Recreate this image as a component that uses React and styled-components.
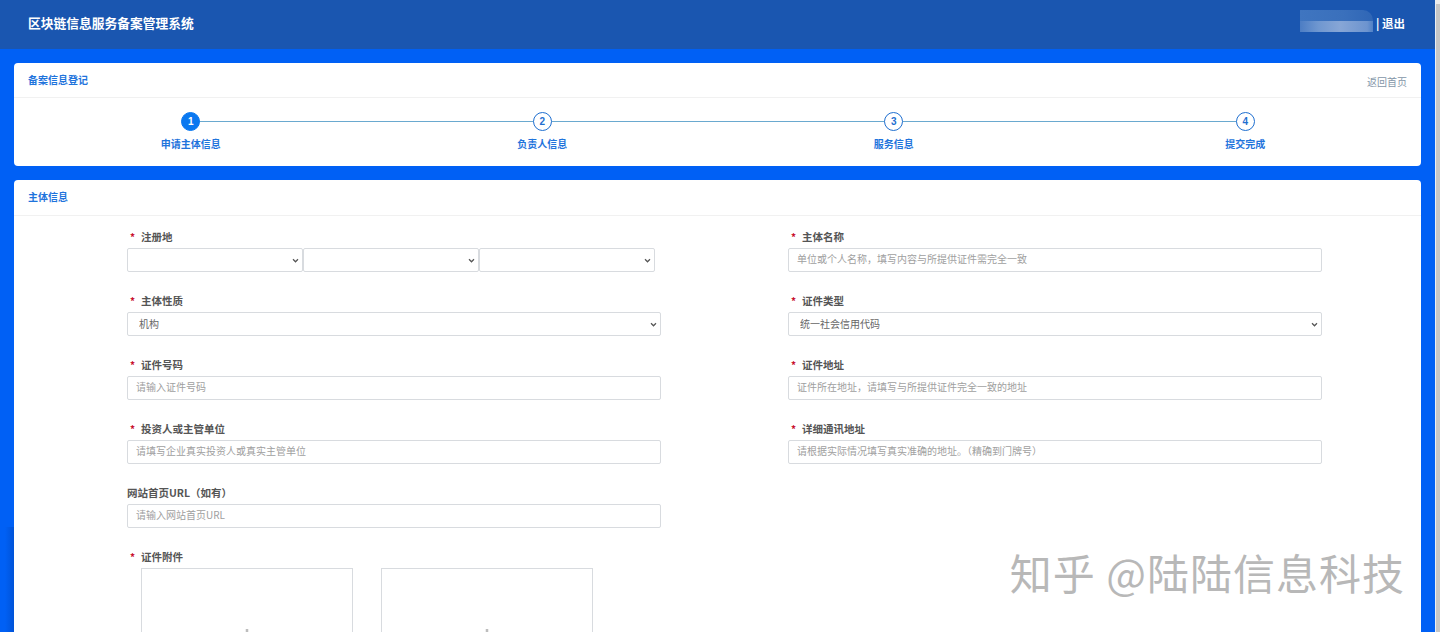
import React from 'react';
import styled, { createGlobalStyle } from 'styled-components';

const chevron =
  "url(\"data:image/svg+xml,%3Csvg xmlns='http://www.w3.org/2000/svg' viewBox='0 0 8 6'%3E%3Cpath d='M1 1.5l3 3 3-3' fill='none' stroke='%23555' stroke-width='1.5'/%3E%3C/svg%3E\")";

const GlobalStyle = createGlobalStyle`
  html, body {
    margin: 0;
    height: 632px;
    overflow: hidden;
    background: #0060f5;
  }
  body, input, select {
    font-family: "Noto Sans CJK SC", "Liberation Sans", sans-serif;
  }
  #root {
    height: 632px;
  }
`;

const Page = styled.div`
  display: flex;
  height: 632px;
  overflow: hidden;
  position: relative;
`;

const Main = styled.div`
  flex: 1;
  min-width: 0;
`;

const Scrollbar = styled.div`
  box-sizing: border-box;
  width: 5px;
  border-left: 1px solid #eceff3;
  background: linear-gradient(180deg, #ececec 0 4px, #c6c6c6 4px);
`;

const EdgeShade = styled.div`
  position: absolute;
  left: 5px;
  top: 527px;
  bottom: 0;
  width: 9px;
  background: linear-gradient(90deg, #0060f5, #0053d8);
`;

const Header = styled.header`
  box-sizing: border-box;
  height: 49px;
  background: #1a56b0;
  display: flex;
  align-items: center;
  justify-content: space-between;
  padding: 0 30px 4px 28px;
  color: #fff;
`;

const Title = styled.div`
  font-size: 12.75px;
  font-weight: 700;
`;

const User = styled.div`
  display: flex;
  align-items: center;
  gap: 3px;
  font-size: 11.5px;
  font-weight: 700;
`;

const BlurredName = styled.div`
  width: 73px;
  height: 22px;
  margin-top: -4px;
  border-radius: 0 10px 0 0;
  background:
    linear-gradient(90deg, #3f75c0, #3a70bc 60%, #2f66b6) top / 100% 50% no-repeat,
    linear-gradient(90deg, #4c7dc4, #6f97d0 25%, #87a6d6 55%, #6d94cf 92%, #4f80c6) bottom / 100% 50% no-repeat;
`;

const Content = styled.main`
  display: flex;
  flex-direction: column;
  gap: 14px;
  padding: 14px 14px 0;
`;

const Card = styled.section`
  background: #fff;
  border-radius: 4px;
`;

const CardHead = styled.div`
  box-sizing: border-box;
  height: ${({ $tall }) => ($tall ? '36px' : '35px')};
  padding: 0 14px 2px;
  display: flex;
  align-items: center;
  justify-content: space-between;
  border-bottom: 1px solid #f1f1f1;
  color: #1f74dc;
  font-size: 10px;
  font-weight: 700;
`;

const BackLink = styled.a`
  color: #8496a8;
  font-size: 10px;
  font-weight: 400;
  padding-top: 5px;
`;

const Steps = styled.div`
  box-sizing: border-box;
  display: grid;
  grid-template-columns: repeat(4, 1fr);
  height: 68px;
  padding-left: 1px;
`;

const Step = styled.div`
  position: relative;
  display: flex;
  flex-direction: column;
  align-items: center;
  padding-top: 14px;
  color: #1f74dc;
  font-size: 10px;
  font-weight: 700;

  &:not(:last-child)::after {
    content: '';
    position: absolute;
    top: 23px;
    left: 50%;
    width: 100%;
    height: 1px;
    background: #6aa9cf;
  }
`;

const StepDot = styled.div`
  position: relative;
  z-index: 1;
  box-sizing: border-box;
  width: 19px;
  height: 19px;
  margin-bottom: 5px;
  border-radius: 50%;
  border: 1.5px solid ${({ $active }) => ($active ? '#0a78f0' : '#1f6fd0')};
  background: ${({ $active }) => ($active ? '#0a78f0' : '#fff')};
  color: ${({ $active }) => ($active ? '#fff' : '#1f6fd0')};
  display: flex;
  align-items: center;
  justify-content: center;
  font-family: "Liberation Sans", sans-serif;
  font-size: 10px;
  font-weight: 700;
`;

const FormGrid = styled.div`
  display: grid;
  grid-template-columns: 534px 534px;
  column-gap: 127px;
  row-gap: 19px;
  padding: 11px 99px 0 113px;
`;

const Field = styled.div`
  display: flex;
  flex-direction: column;
  ${({ $full }) => $full && 'grid-column: 1 / -1;'}
`;

const Label = styled.label`
  box-sizing: border-box;
  height: 21px;
  padding: 0 0 3px ${({ $required }) => ($required ? '3px' : '0')};
  display: flex;
  align-items: center;
  color: #555;
  font-size: 10.5px;
  font-weight: 700;
`;

const Star = styled.span`
  width: 11px;
  color: #c8102e;
  font-size: 10px;
`;

const Input = styled.input`
  box-sizing: border-box;
  width: 100%;
  height: 24px;
  padding: 0 8px 3px;
  background: #fff;
  border: 1px solid #d8dbdf;
  border-radius: 2px;
  font-size: 10px;
  outline: none;

  &::placeholder {
    color: #a0a0a0;
  }
`;

const Select = styled.select`
  box-sizing: border-box;
  appearance: none;
  width: ${({ $narrow }) => ($narrow ? '176px' : '100%')};
  height: 24px;
  padding: 0 16px 2px 11px;
  background: #fff ${chevron} no-repeat right 3px center / 7px 5px;
  border: 1px solid #d8dbdf;
  border-radius: 2px;
  color: #666;
  font-size: 10px;
  outline: none;
`;

const SelectGroup = styled.div`
  display: flex;
`;

const Uploads = styled.div`
  display: flex;
  gap: 28px;
  padding-left: 14px;
`;

const UploadBox = styled.div`
  box-sizing: border-box;
  width: 212px;
  height: 130px;
  border: 1px solid #d8dbdf;
  display: flex;
  justify-content: center;
  padding-top: 60px;
`;

const PlusIcon = () => (
  <svg width="18" height="18" viewBox="0 0 18 18" fill="none" stroke="#bdbdbd" strokeWidth="2.5">
    <path d="M9 0v18M0 9h18" />
  </svg>
);

const Watermark = styled.div`
  position: absolute;
  right: 35px;
  top: 544px;
  color: #b8b8b8;
  font-size: 42px;
  line-height: 56px;
  letter-spacing: 1px;
  white-space: nowrap;
`;

const steps = ['申请主体信息', '负责人信息', '服务信息', '提交完成'];

const FormField = ({ label, required, children, full }) => (
  <Field $full={full}>
    <Label $required={required}>
      {required && <Star>*</Star>}
      {label}
    </Label>
    {children}
  </Field>
);

const App = () => {
  return (
    <Page>
      <GlobalStyle />
      <Main>
        <Header>
          <Title>区块链信息服务备案管理系统</Title>
          <User>
            <BlurredName />
            <span>| 退出</span>
          </User>
        </Header>
        <Content>
          <Card>
            <CardHead>
              备案信息登记
              <BackLink>返回首页</BackLink>
            </CardHead>
            <Steps>
              {steps.map((name, i) => (
                <Step key={name}>
                  <StepDot $active={i === 0}>{i + 1}</StepDot>
                  {name}
                </Step>
              ))}
            </Steps>
          </Card>
          <Card>
            <CardHead $tall>主体信息</CardHead>
            <FormGrid>
              <FormField label="注册地" required>
                <SelectGroup>
                  <Select $narrow />
                  <Select $narrow />
                  <Select $narrow />
                </SelectGroup>
              </FormField>
              <FormField label="主体名称" required>
                <Input placeholder="单位或个人名称，填写内容与所提供证件需完全一致" />
              </FormField>
              <FormField label="主体性质" required>
                <Select defaultValue="机构">
                  <option>机构</option>
                </Select>
              </FormField>
              <FormField label="证件类型" required>
                <Select defaultValue="统一社会信用代码">
                  <option>统一社会信用代码</option>
                </Select>
              </FormField>
              <FormField label="证件号码" required>
                <Input placeholder="请输入证件号码" />
              </FormField>
              <FormField label="证件地址" required>
                <Input placeholder="证件所在地址，请填写与所提供证件完全一致的地址" />
              </FormField>
              <FormField label="投资人或主管单位" required>
                <Input placeholder="请填写企业真实投资人或真实主管单位" />
              </FormField>
              <FormField label="详细通讯地址" required>
                <Input placeholder="请根据实际情况填写真实准确的地址。（精确到门牌号）" />
              </FormField>
              <FormField label="网站首页URL（如有）">
                <Input placeholder="请输入网站首页URL" />
              </FormField>
              <FormField label="证件附件" required full>
                <Uploads>
                  <UploadBox><PlusIcon /></UploadBox>
                  <UploadBox><PlusIcon /></UploadBox>
                </Uploads>
              </FormField>
            </FormGrid>
          </Card>
        </Content>
      </Main>
      <Scrollbar />
      <EdgeShade />
      <Watermark>知乎 @陆陆信息科技</Watermark>
    </Page>
  );
};

export default App;
